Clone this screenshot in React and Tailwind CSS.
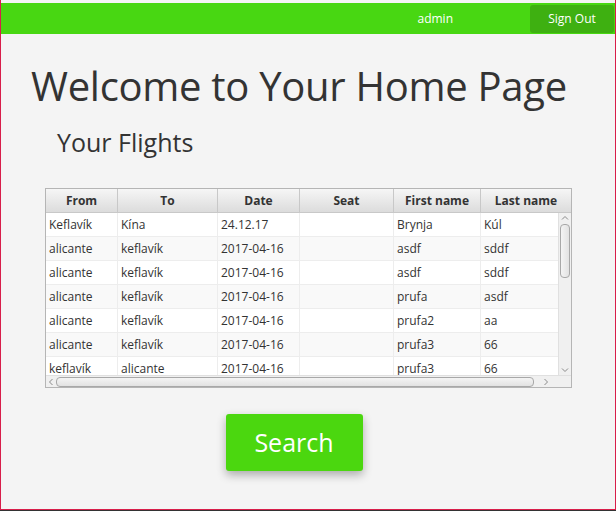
const columns = [
  { label: "From", key: "from", width: "w-[72px]" },
  { label: "To", key: "to", width: "w-[100px]" },
  { label: "Date", key: "date", width: "w-[82px]" },
  { label: "Seat", key: "seat", width: "w-[94px]" },
  { label: "First name", key: "first", width: "w-[87px]" },
  { label: "Last name", key: "last", width: "w-[90px]" },
];

const flights = [
  { from: "Keflavík", to: "Kína", date: "24.12.17", seat: "", first: "Brynja", last: "Kúl" },
  { from: "alicante", to: "keflavík", date: "2017-04-16", seat: "", first: "asdf", last: "sddf" },
  { from: "alicante", to: "keflavík", date: "2017-04-16", seat: "", first: "asdf", last: "sddf" },
  { from: "alicante", to: "keflavík", date: "2017-04-16", seat: "", first: "prufa", last: "asdf" },
  { from: "alicante", to: "keflavík", date: "2017-04-16", seat: "", first: "prufa2", last: "aa" },
  { from: "alicante", to: "keflavík", date: "2017-04-16", seat: "", first: "prufa3", last: "66" },
  { from: "keflavík", to: "alicante", date: "2017-04-16", seat: "", first: "prufa3", last: "66" },
];

const Arrow = ({ d }) => (
  <svg width="8" height="8" viewBox="0 0 8 8">
    <path d={d} fill="none" stroke="#8a8a8a" strokeWidth="1" />
  </svg>
);

const FlightsTable = () => (
  <div className="w-[527px] h-[200px] border border-[#b5b5b5] bg-white flex flex-col text-[12px] text-[#333]">
    <div className="flex h-[24px] shrink-0 bg-gradient-to-b from-[#f6f6f6] to-[#dcdcdc] border-b border-[#c8c8c8]">
      {columns.map((col, i) => (
        <div
          key={col.key}
          className={`${col.width} shrink-0 flex items-center justify-center pt-[1px] font-bold text-[12px] text-[#333] ${
            i < columns.length - 1 ? "border-r border-[#c8c8c8]" : ""
          }`}
        >
          {col.label}
        </div>
      ))}
    </div>
    <div className="flex flex-1 min-h-0">
      <div className="flex-1 overflow-hidden">
        {flights.map((flight, index) => (
          <div
            key={index}
            className={`flex h-[24px] border-b border-[#ededed] ${index % 2 === 1 ? "bg-[#f9f9f9]" : "bg-white"}`}
          >
            {columns.map((col, i) => (
              <div
                key={col.key}
                className={`${i === columns.length - 1 ? "flex-1" : col.width} shrink-0 flex items-center px-[3px] ${
                  i < columns.length - 1 ? "border-r border-[#ededed]" : ""
                }`}
              >
                {flight[col.key]}
              </div>
            ))}
          </div>
        ))}
      </div>
      <div className="w-[13px] shrink-0 bg-[#f0f0f0] border-l border-[#e0e0e0] flex flex-col items-center">
        <div className="h-[10px] flex items-center">
          <Arrow d="M1 5.5 L4 2.5 L7 5.5" />
        </div>
        <div className="w-[10px] h-[54px] mt-[1px] rounded-[4px] border border-[#a8a8a8] bg-gradient-to-r from-[#f4f4f4] to-[#e2e2e2]" />
        <div className="flex-1" />
        <div className="h-[10px] flex items-center">
          <Arrow d="M1 2.5 L4 5.5 L7 2.5" />
        </div>
      </div>
    </div>
    <div className="h-[12px] shrink-0 flex items-center bg-[#f0f0f0] border-t border-[#e0e0e0]">
      <div className="w-[10px] flex justify-center">
        <Arrow d="M5.5 1 L2.5 4 L5.5 7" />
      </div>
      <div className="w-[478px] h-[10px] rounded-[4px] border border-[#a8a8a8] bg-gradient-to-b from-[#f4f4f4] to-[#e2e2e2]" />
      <div className="flex-1 flex justify-center">
        <Arrow d="M2.5 1 L5.5 4 L2.5 7" />
      </div>
      <div className="w-[13px]" />
    </div>
  </div>
);

export default function App() {
  return (
    <div
      className="w-[616px] h-[511px] bg-white flex flex-col overflow-hidden"
      style={{ fontFamily: '"Open Sans", "Noto Sans", sans-serif' }}
    >
      <div className="flex-1 flex flex-col border-x border-b border-[#d81e4a] pt-[3px] bg-[#f4f4f4] min-h-0">
        <div className="h-[31px] bg-[#48d712] flex items-center justify-end pr-[1px] shrink-0">
          <span className="text-[12px] text-white mr-[77px] mt-[1px]">admin</span>
          <button className="w-[84px] h-[28px] rounded-[3px] bg-[#3eb011] text-[12px] text-white">Sign Out</button>
        </div>
        <div className="flex-1 flex flex-col px-[30px] pt-[24px]">
          <h1 className="text-[40px] leading-[56px] text-[#333] tracking-[-0.28px]">Welcome to Your Home Page</h1>
          <h2 className="text-[25px] leading-[32px] text-[#333] ml-[26px] mt-[12px]">Your Flights</h2>
          <div className="mt-[30px] ml-[14px]">
            <FlightsTable />
          </div>
          <div className="flex justify-center mt-[26px] pr-[30px]">
            <button className="ml-[2px] w-[137px] h-[57px] rounded-[3px] bg-[#4bd70f] text-white text-[25px] shadow-[0_4px_10px_rgba(0,0,0,0.3)]">
              Search
            </button>
          </div>
        </div>
      </div>
      <div className="h-[1px] bg-[#333] shrink-0" />
    </div>
  );
}
